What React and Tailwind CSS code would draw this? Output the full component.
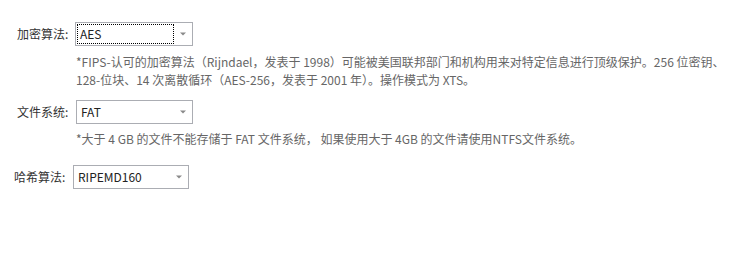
import React from "react";

function Arrow() {
  return (
    <div className="w-[18px] h-full flex items-center justify-center shrink-0">
      <svg width="6" height="4" viewBox="0 0 6 4">
        <path d="M0 0.5 L6 0.5 L3 3.5 Z" fill="#8a8a8a" />
      </svg>
    </div>
  );
}

function Select({ value, width, focused }) {
  return (
    <div
      className="h-[24px] border border-[#abadb3] bg-white flex items-center"
      style={{ width }}
    >
      {focused ? (
        <div className="ml-[1px] flex-1 h-[20px] border border-dotted border-black flex items-center pl-[2px] text-[#222]">
          {value}
        </div>
      ) : (
        <div className="flex-1 h-full flex items-center pl-[4px] text-[#222]">{value}</div>
      )}
      <Arrow />
    </div>
  );
}

export default function App() {
  const font = { fontFamily: '"Noto Sans CJK SC", "Noto Sans", sans-serif' };
  return (
    <div
      className="w-[748px] h-[279px] bg-white pt-[22px] pl-[17px] text-[12px] text-[#333]"
      style={font}
    >
      <div className="flex items-center h-[24px]">
        <div className="w-[58px] whitespace-nowrap">加密算法:</div>
        <Select value="AES" width={118} focused />
      </div>
      <div className="ml-[59px] mt-[7px] leading-[18px] text-[#666] whitespace-nowrap">
        <div>
          *FIPS-认可的加密算法（Rijndael，发表于 1998）可能被美国联邦部门和机构用来对特定信息进行顶级保护。256 位密钥、
        </div>
        <div>128-位块、14 次离散循环（AES-256，发表于 2001 年）。操作模式为 XTS。</div>
      </div>

      <div className="flex items-center h-[24px] mt-[11px]">
        <div className="w-[59px] whitespace-nowrap">文件系统:</div>
        <Select value="FAT" width={117} />
      </div>
      <div className="ml-[59px] mt-[6px] leading-[18px] text-[#666] whitespace-nowrap">
        *大于 4 GB 的文件不能存储于 FAT 文件系统， 如果使用大于 4GB 的文件请使用NTFS文件系统。
      </div>

      <div className="flex items-center h-[24px] mt-[17px] -ml-[3px]">
        <div className="w-[59px] whitespace-nowrap">哈希算法:</div>
        <Select value="RIPEMD160" width={116} />
      </div>
    </div>
  );
}
